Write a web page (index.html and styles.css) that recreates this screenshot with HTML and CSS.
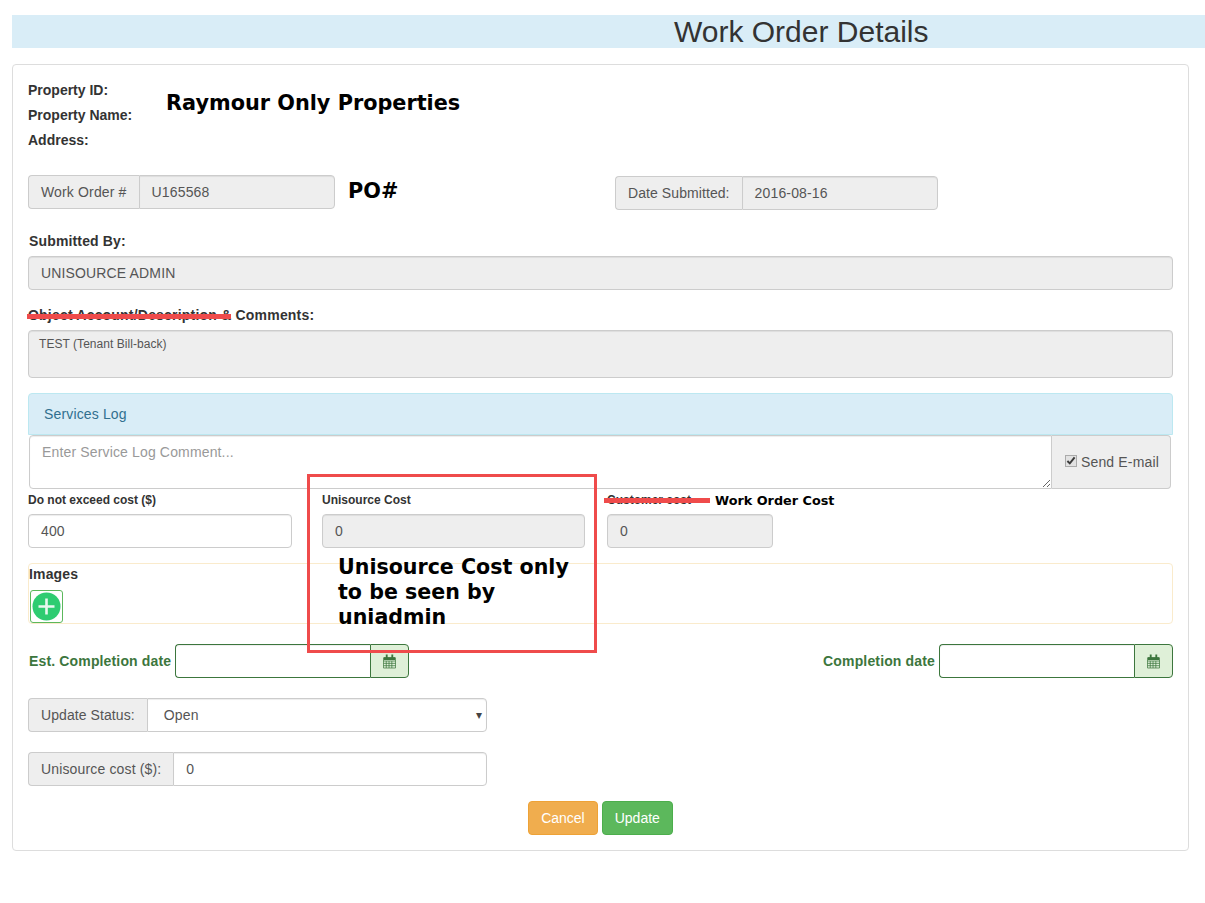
FILE: index.html
```html
<!DOCTYPE html>
<html lang="en">

<head>
    <meta charset="UTF-8">
    <title>Work Order Details</title>
    <link rel="stylesheet" href="styles.css">
</head>

<body>
    <div id="page">
        <h1 class="page-title">Work Order Details</h1>

        <div class="panel">
            <div class="info">
                <div>Property ID:</div>
                <div>Property Name:</div>
                <div>Address:</div>
            </div>

            <div class="top-row">
                <div class="group wo-group">
                    <span class="addon">Work Order #</span>
                    <div class="control disabled">U165568</div>
                </div>
                <div class="group date-sub-group">
                    <span class="addon">Date Submitted:</span>
                    <div class="control disabled">2016-08-16</div>
                </div>
            </div>

            <div class="label submitted-label">Submitted By:</div>
            <div class="control disabled">UNISOURCE ADMIN</div>

            <div class="label comments-label">Object Account/Description &amp; Comments:</div>
            <div class="control disabled comments-box">TEST (Tenant Bill-back)</div>

            <div class="log-heading">Services Log</div>
            <div class="log-row">
                <div class="control log-text">Enter Service Log Comment...</div>
                <label class="log-send"><input type="checkbox" checked>Send E-mail</label>
            </div>

            <div class="cost-row">
                <div class="cost-col col-a">
                    <div class="small-label">Do not exceed cost ($)</div>
                    <div class="control">400</div>
                </div>
                <div class="cost-col col-b">
                    <div class="small-label">Unisource Cost</div>
                    <div class="control disabled">0</div>
                </div>
                <div class="cost-col col-c">
                    <div class="small-label">Customer cost</div>
                    <div class="control disabled">0</div>
                </div>
            </div>

            <div class="images-well">
                <div class="label">Images</div>
                <div class="add-btn">
                    <svg width="29" height="29" viewBox="0 0 29 29">
                        <circle cx="14.5" cy="14.5" r="14" fill="#2ecc71" />
                        <path d="M14.5 6.5v16M6.5 14.5h16" stroke="#e8f8ef" stroke-width="2.6" fill="none" />
                    </svg>
                </div>
            </div>

            <div class="date-row">
                <div class="date-item">
                    <span class="date-label">Est. Completion date</span>
                    <div class="group date-group">
                        <div class="control"></div>
                        <span class="addon cal">
                            <svg width="14" height="15" viewBox="0 0 14 15">
                                <path d="M.5 3.5h13v11H.5zM.5 7h13M.5 9.5h13M.5 12h13M3.5 7v7.5M6.5 7v7.5M9.5 7v7.5" fill="none" stroke="#3c763d" stroke-opacity=".8" />
                                <path d="M1 3h12v3H1zM3 0h2v4H3zM9 0h2v4H9z" fill="#3c763d" />
                            </svg>
                        </span>
                    </div>
                </div>
                <div class="date-item">
                    <span class="date-label">Completion date</span>
                    <div class="group date-group">
                        <div class="control"></div>
                        <span class="addon cal">
                            <svg width="14" height="15" viewBox="0 0 14 15">
                                <path d="M.5 3.5h13v11H.5zM.5 7h13M.5 9.5h13M.5 12h13M3.5 7v7.5M6.5 7v7.5M9.5 7v7.5" fill="none" stroke="#3c763d" stroke-opacity=".8" />
                                <path d="M1 3h12v3H1zM3 0h2v4H3zM9 0h2v4H9z" fill="#3c763d" />
                            </svg>
                        </span>
                    </div>
                </div>
            </div>

            <div class="group wide-group status-group">
                <span class="addon">Update Status:</span>
                <div class="control select-box"><span>Open</span><span class="caret">&#9662;</span></div>
            </div>

            <div class="group wide-group cost-group">
                <span class="addon">Unisource cost ($):</span>
                <div class="control">0</div>
            </div>

            <div class="buttons">
                <button class="btn btn-cancel">Cancel</button>
                <button class="btn btn-update">Update</button>
            </div>
        </div>

        <!-- markup added on top of the screenshot -->
        <div class="note note-raymour">Raymour Only Properties</div>
        <div class="note note-po">PO#</div>
        <div class="strike strike-comments"></div>
        <div class="strike strike-customer"></div>
        <div class="note note-wo">Work Order Cost</div>
        <div class="red-box"></div>
        <div class="note note-uni">Unisource Cost only<br>to be seen by<br>uniadmin</div>
    </div>
</body>

</html>
```

FILE: styles.css
```css
* {
    margin: 0;
    padding: 0;
    box-sizing: border-box;
}

body {
    font-family: "Liberation Sans", Arial, sans-serif;
    font-size: 14px;
    line-height: 20px;
    letter-spacing: 0.15px;
    color: #333;
    background: #fff;
}

#page {
    position: relative;
    height: 903px;
    overflow: hidden;
    padding: 15px 0 0 12px;
}

.page-title {
    height: 33px;
    padding-left: 662px;
    font-size: 30px;
    font-weight: normal;
    line-height: 33px;
    letter-spacing: 0;
    background: #d9edf7;
}

.panel {
    width: 1177px;
    margin-top: 16px;
    padding: 13px 15px 15px;
    border: 1px solid #ddd;
    border-radius: 4px;
}

.info {
    font-weight: bold;
    line-height: 25px;
    letter-spacing: 0;
}

/* form bits */
.control {
    flex: 1;
    height: 34px;
    padding: 6px 12px;
    border: 1px solid #ccc;
    border-radius: 4px;
    color: #555;
    background: #fff;
    box-shadow: inset 0 1px 1px rgba(0, 0, 0, 0.075);
}

.disabled {
    background: #eee;
}

.addon {
    display: block;
    padding: 6px 12px;
    border: 1px solid #ccc;
    border-right: 0;
    border-radius: 4px 0 0 4px;
    color: #555;
    background: #eee;
    white-space: nowrap;
}

.group {
    display: flex;
    height: 34px;
}

.group .control {
    border-radius: 0 4px 4px 0;
}

.label {
    font-weight: bold;
}

.top-row {
    display: flex;
    margin-top: 22px;
}

.wo-group {
    width: 307px;
}

.date-sub-group {
    width: 323px;
    margin: 1px 0 0 280px;
}

.date-sub-group .addon,
.status-group .addon {
    letter-spacing: 0.08px;
}

.submitted-label {
    margin: 21px 0 5px 1px;
}

.comments-label {
    margin: 15px 0 5px;
    letter-spacing: 0.2px;
}

.comments-box {
    height: 48px;
    padding: 5px 10px;
    font-size: 12px;
    line-height: 17px;
    letter-spacing: 0.05px;
}

.log-heading {
    height: 42px;
    margin-top: 15px;
    padding: 10px 15px;
    border: 1px solid #bce8f1;
    border-radius: 4px 4px 0 0;
    color: #31708f;
    background: #d9edf7;
}

.log-row {
    display: flex;
    width: 1142px;
    height: 54px;
    margin-left: 1px;
}

.log-text {
    height: 54px;
    border-radius: 4px 0 0 4px;
    color: #999;
    overflow: auto;
    resize: vertical;
}

.log-send {
    width: 119px;
    padding-top: 16px;
    padding-left: 13px;
    border: 1px solid #ccc;
    border-left: 0;
    border-radius: 0 4px 4px 0;
    color: #555;
    background: #eee;
}

.log-send input {
    width: 12px;
    height: 12px;
    margin-right: 4px;
    accent-color: #e2e2e2;
    outline: 1px solid #aaa;
    outline-offset: -1px;
}

.cost-row {
    display: flex;
    margin-top: 3px;
}

.small-label {
    margin-bottom: 5px;
    font-size: 12px;
    font-weight: bold;
    line-height: 17px;
    letter-spacing: 0;
}

.col-a {
    width: 264px;
}

.col-b {
    width: 263px;
    margin-left: 30px;
}

.col-c {
    width: 166px;
    margin-left: 22px;
}

.cost-col .control {
    display: block;
}

.images-well {
    height: 61px;
    margin-top: 15px;
    border: 1px solid #faebcc;
    border-radius: 4px;
}

.add-btn {
    width: 33px;
    height: 33px;
    margin: 6px 0 0 1px;
    padding: 1px;
    border: 1px solid #5cb85c;
    border-radius: 3px;
    background: #fff;
}

.add-btn svg {
    display: block;
}

.date-row {
    display: flex;
    justify-content: space-between;
    margin-top: 20px;
}

.date-item {
    display: flex;
    align-items: center;
    gap: 4px;
    padding-left: 1px;
}

.date-label {
    font-weight: bold;
    color: #3c763d;
}

.date-group {
    width: 234px;
}

.date-group .control {
    border-color: #3c763d;
    border-right: 0;
    border-radius: 4px 0 0 4px;
}

.cal {
    display: flex;
    align-items: center;
    width: 39px;
    border: 1px solid #3c763d;
    border-radius: 0 4px 4px 0;
    background: #dff0d8;
}

.wide-group {
    width: 459px;
    margin-top: 20px;
}

.select-box {
    display: flex;
    justify-content: space-between;
    padding-left: 16px;
    padding-right: 4px;
}

.caret {
    font-size: 12px;
    color: #444;
}

.buttons {
    display: flex;
    justify-content: center;
    gap: 4px;
    margin-top: 15px;
}

.btn {
    height: 34px;
    padding: 6px 12px;
    border: 1px solid;
    border-radius: 4px;
    font-family: inherit;
    font-size: 14px;
    line-height: 20px;
    color: #fff;
}

.btn-cancel {
    background: #f0ad4e;
    border-color: #eea236;
}

.btn-update {
    background: #5cb85c;
    border-color: #4cae4c;
}

/* annotations */
.note {
    position: absolute;
    font-family: "DejaVu Sans", Verdana, sans-serif;
    font-weight: bold;
    letter-spacing: 0;
    color: #000;
    white-space: nowrap;
}

.note-raymour {
    left: 166px;
    top: 90px;
    font-size: 20.8px;
    line-height: 26px;
}

.note-po {
    left: 348px;
    top: 178px;
    font-size: 20.8px;
    line-height: 26px;
}

.note-wo {
    left: 715px;
    top: 492px;
    font-size: 12.8px;
    line-height: 18px;
}

.note-uni {
    left: 338px;
    top: 555px;
    font-size: 20.6px;
    line-height: 25px;
}

.strike {
    position: absolute;
    height: 5px;
    background: #ef4b4b;
}

.strike-comments {
    left: 27px;
    top: 314px;
    width: 204px;
}

.strike-customer {
    left: 604px;
    top: 498px;
    width: 106px;
}

.red-box {
    position: absolute;
    left: 307px;
    top: 474px;
    width: 290px;
    height: 179px;
    border: 3px solid #ef4b4b;
}
```
